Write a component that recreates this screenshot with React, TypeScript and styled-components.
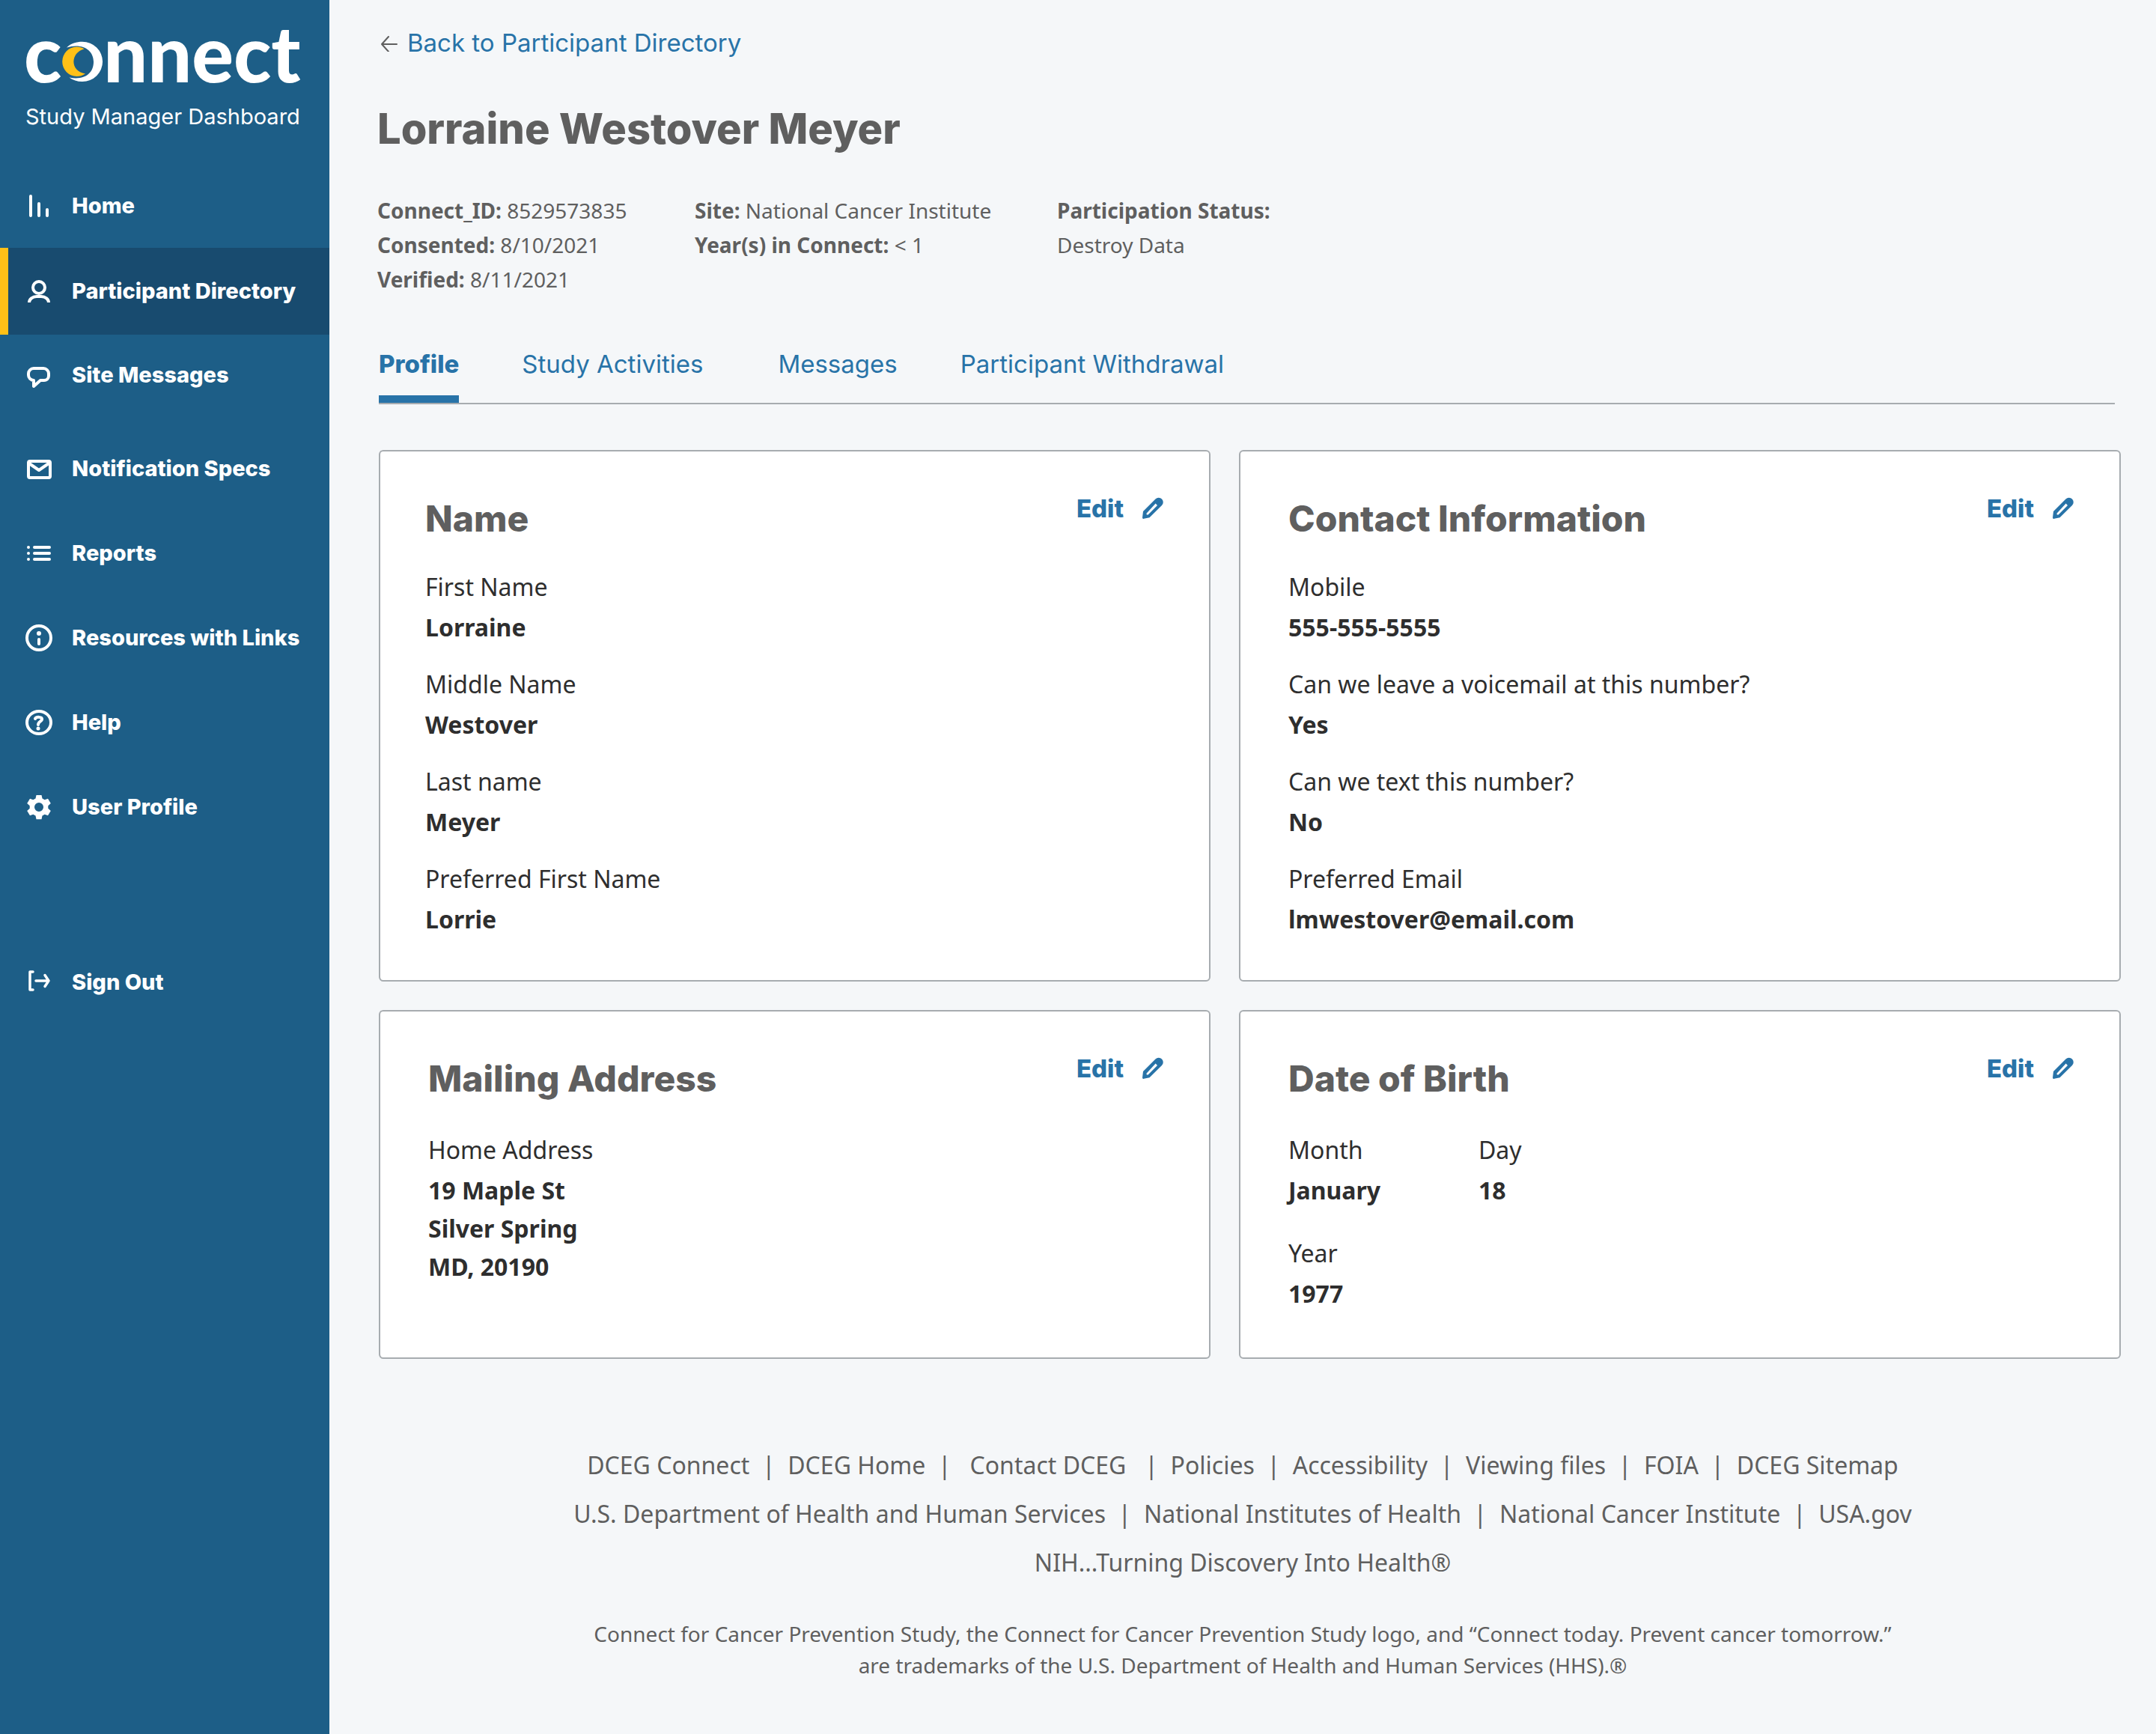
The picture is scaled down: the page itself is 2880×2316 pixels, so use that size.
import React from "react";
import styled, { createGlobalStyle } from "styled-components";

const color = {
  sidebar: "#1d5e87",
  sidebarActive: "#184b6f",
  gold: "#ffc017",
  page: "#f5f7f9",
  link: "#2873a8",
  heading: "#5f5f5f",
  ink: "#2e2e2e",
  border: "#a7acb0",
};

const display = `Inter, "Open Sans", sans-serif`;
const body = `"Noto Sans", "Open Sans", sans-serif`;

const GlobalStyle = createGlobalStyle`
  *, *::before, *::after { box-sizing: border-box; }
  body { margin: 0; background: ${color.page}; font-family: ${body}; color: ${color.ink}; }
  a { color: inherit; text-decoration: none; }
  h1, h2, p, ul, dl, dd { margin: 0; padding: 0; }
  ul { list-style: none; }
`;

const Page = styled.div`
  display: grid;
  grid-template-columns: 440px 1fr;
  min-height: 100vh;
`;

/* Sidebar */

const Sidebar = styled.aside`
  background: ${color.sidebar};
  color: #fff;
  font-family: ${display};
`;

const Brand = styled.div`
  height: 218px;
  padding: 12px 34px 0 32px;
`;

const Logo = styled.a`
  display: flex;
  align-items: baseline;
  height: 124px;
  font-family: Lato, sans-serif;
  font-size: 104px;
  line-height: 116px;
  font-weight: 900;
`;

const LogoMoon = styled.svg`
  flex: none;
  width: 56px;
  height: 56px;
`;

const BrandCaption = styled.p`
  padding-left: 2px;
  font-size: 29px;
  line-height: 40px;
  white-space: nowrap;
`;

const NavGroup = styled.ul<{ $before?: number }>`
  margin-top: ${(p) => p.$before ?? 0}px;
`;

const NavLink = styled.a<{ $active?: boolean }>`
  display: flex;
  align-items: center;
  gap: 26px;
  height: ${(p) => (p.$active ? 116 : 113)}px;
  margin-bottom: ${(p) => (p.$active ? -3 : 0)}px;
  padding-left: 23px;
  border-left: 11px solid ${(p) => (p.$active ? color.gold : "transparent")};
  background: ${(p) => (p.$active ? color.sidebarActive : "transparent")};
  font-size: 29px;
  line-height: 36px;
  font-weight: 800;
  white-space: nowrap;
`;

const NavIcon = styled.svg`
  flex: none;
  width: 36px;
  height: 36px;
  fill: none;
  stroke: #fff;
  stroke-width: 4;
  stroke-linecap: round;
  stroke-linejoin: round;
`;

/* Main column */

const Main = styled.main`
  padding: 37px 47px 0 64px;
`;

const BackLink = styled.a`
  display: inline-flex;
  align-items: center;
  gap: 12px;
  padding-left: 2px;
  font-family: ${display};
  font-size: 33px;
  line-height: 40px;
  color: ${color.link};
`;

const BackArrow = styled.svg`
  width: 26px;
  height: 24px;
  fill: none;
  stroke: ${color.heading};
  stroke-width: 2;
  stroke-linecap: round;
  stroke-linejoin: round;
`;

const PersonName = styled.h1`
  margin-top: 61px;
  font-family: ${display};
  font-size: 56px;
  line-height: 68px;
  font-weight: 800;
  color: ${color.heading};
`;

const Facts = styled.div`
  display: grid;
  grid-template-columns: 424px 484px 1fr;
  margin-top: 52px;
  font-size: 28px;
  line-height: 46px;
  color: ${color.heading};
`;

const Tabs = styled.nav`
  display: flex;
  margin: 70px 8px 0 2px;
  border-bottom: 2px solid ${color.border};
`;

const Tab = styled.a<{ $active?: boolean; $gap?: number }>`
  margin-right: ${(p) => p.$gap ?? 84}px;
  padding-bottom: 22px;
  border-bottom: 10px solid ${(p) => (p.$active ? color.link : "transparent")};
  font-family: ${display};
  font-size: 33px;
  line-height: 40px;
  font-weight: ${(p) => (p.$active ? 800 : 400)};
  color: ${color.link};
`;

const CardGrid = styled.div`
  display: grid;
  grid-template-columns: 1111fr 1178fr;
  gap: 38px;
  margin: 61px 0 0 2px;
`;

const Card = styled.section<{ $inset: number; $bottom: number }>`
  padding: 60px 60px ${(p) => p.$bottom}px ${(p) => p.$inset}px;
  background: #fff;
  border: 2px solid ${color.border};
  border-radius: 6px;
`;

const CardHeader = styled.header`
  display: flex;
  justify-content: space-between;
  align-items: flex-start;
`;

const CardTitle = styled.h2`
  font-family: ${display};
  font-size: 48px;
  line-height: 60px;
  font-weight: 800;
  color: ${color.heading};
`;

const EditButton = styled.button`
  display: flex;
  align-items: center;
  gap: 24px;
  height: 32px;
  padding: 0;
  border: 0;
  background: none;
  font-family: ${display};
  font-size: 33px;
  line-height: 32px;
  font-weight: 800;
  color: ${color.link};
  cursor: pointer;
`;

const Pencil = styled.svg`
  width: 30px;
  height: 30px;
`;

const Fields = styled.dl<{ $top: number; $gap: number; $columns?: string }>`
  display: grid;
  grid-template-columns: ${(p) => p.$columns ?? "1fr"};
  row-gap: ${(p) => p.$gap}px;
  margin-top: ${(p) => p.$top}px;
  font-size: 32px;
`;

const Label = styled.dt`
  line-height: 57px;
`;

const Value = styled.dd`
  line-height: 51px;
  font-weight: 700;
`;

/* Footer */

const Footer = styled.footer`
  padding: 109px 0 40px;
  text-align: center;
  color: ${color.heading};
`;

const FooterLinks = styled.p`
  font-size: 32px;
  line-height: 65px;
`;

const Separator = styled.span`
  white-space: pre;
`;

const Trademark = styled.p`
  margin-top: 42px;
  font-size: 28px;
  line-height: 42px;
`;

const icons: Record<string, React.ReactNode> = {
  bars: (
    <path d="M7 5v26M18 15v16M29 23v8" />
  ),
  person: (
    <>
      <circle cx="18" cy="13" r="8" />
      <path d="M5 33a10 8 0 0 1 10-8h6a10 8 0 0 1 10 8" strokeLinecap="butt" />
    </>
  ),
  message: (
    <path d="M11 9h13a7 7 0 0 1 7 7v3a6 6 0 0 1-6 6h-5l-9 8v-8a7 7 0 0 1-7-7v-2a7 7 0 0 1 7-7Z" />
  ),
  mail: (
    <>
      <rect x="4" y="8" width="29" height="22" rx="2" />
      <path d="M5 11l13 9 13-9" />
    </>
  ),
  list: (
    <path d="M4 10v0M4 18v0M4 26v0M12 10h20M12 18h20M12 26h20" />
  ),
  info: (
    <>
      <circle cx="18" cy="18" r="16" />
      <circle cx="18" cy="12" r="3" fill="#fff" stroke="none" />
      <path d="M18 20v6" />
    </>
  ),
  help: (
    <>
      <ellipse cx="18" cy="18" rx="16" ry="15" />
      <path d="M13 13c1-3 10-3 9 1-1 3-5 3-5 7" />
      <circle cx="17" cy="26" r="2.5" fill="#fff" stroke="none" />
    </>
  ),
  gear: (
    <path
      fill="#fff"
      stroke="none"
      fillRule="evenodd"
      d="M14.5 2h7l1 4.6 3.2 1.7L30 6.8l3.8 6.2-3.5 3.2v3.6l3.5 3.2-3.8 6.2-4.3-1.5-3.2 1.7-1 4.8h-7l-1-4.8-3.2-1.7L6 29.2l-3.8-6.2 3.5-3.2v-3.6L2.2 13 6 6.800l4.300 1.500 3.200-1.700ZM18 12a6 6 0 1 0 0 12 6 6 0 0 0 0-12Z"
    />
  ),
  exit: (
    <path d="M10 4H6v24h4M14 16h17M26 8.500l5 7.500-5 7.500" strokeWidth="3.5" />
  ),
};

type NavEntry = { icon: string; text: string; active?: boolean };

const navGroups: { before: number; items: NavEntry[] }[] = [
  {
    before: 0,
    items: [
      { icon: "bars", text: "Home" },
      { icon: "person", text: "Participant Directory", active: true },
      { icon: "message", text: "Site Messages" },
    ],
  },
  {
    before: 12,
    items: [
      { icon: "mail", text: "Notification Specs" },
      { icon: "list", text: "Reports" },
      { icon: "info", text: "Resources with Links" },
      { icon: "help", text: "Help" },
      { icon: "gear", text: "User Profile" },
    ],
  },
  { before: 121, items: [{ icon: "exit", text: "Sign Out" }] },
];

type FieldEntry = { label: string; value: string[] };

function FieldItem({ label, value }: FieldEntry) {
  return (
    <div>
      <Label>{label}</Label>
      {value.map((line) => (
        <Value key={line}>{line}</Value>
      ))}
    </div>
  );
}

type CardEntry = {
  title: string;
  inset: number;
  top: number;
  bottom: number;
  gap: number;
  columns?: string;
  fields: FieldEntry[];
};

const cards: CardEntry[] = [
  {
    title: "Name",
    inset: 60,
    top: 32,
    bottom: 56,
    gap: 22,
    fields: [
      { label: "First Name", value: ["Lorraine"] },
      { label: "Middle Name", value: ["Westover"] },
      { label: "Last name", value: ["Meyer"] },
      { label: "Preferred First Name", value: ["Lorrie"] },
    ],
  },
  {
    title: "Contact Information",
    inset: 64,
    top: 32,
    bottom: 56,
    gap: 22,
    fields: [
      { label: "Mobile", value: ["555-555-5555"] },
      { label: "Can we leave a voicemail at this number?", value: ["Yes"] },
      { label: "Can we text this number?", value: ["No"] },
      { label: "Preferred Email", value: ["lmwestover@email.com"] },
    ],
  },
  {
    title: "Mailing Address",
    inset: 64,
    top: 36,
    bottom: 60,
    gap: 22,
    fields: [{ label: "Home Address", value: ["19 Maple St", "Silver Spring", "MD, 20190"] }],
  },
  {
    title: "Date of Birth",
    inset: 64,
    top: 36,
    bottom: 60,
    gap: 30,
    columns: "254px 1fr",
    fields: [
      { label: "Month", value: ["January"] },
      { label: "Day", value: ["18"] },
      { label: "Year", value: ["1977"] },
    ],
  },
];

function InfoCard({ title, inset, top, bottom, gap, columns, fields }: CardEntry) {
  return (
    <Card $inset={inset} $bottom={bottom}>
      <CardHeader>
        <CardTitle>{title}</CardTitle>
        <EditButton type="button" aria-label={`Edit ${title}`}>
          Edit
          <Pencil viewBox="0 0 30 30" aria-hidden="true">
            <path
              fill={color.link}
              fillRule="evenodd"
              d="M1 27.500 2 19 18.500 2.500a6 6 0 0 1 8.500 8.500L10.500 27.300 3 28.800a1.500 1.500 0 0 1-2-1.300ZM6.500 21.800l.2 1.700 1.900-.1L21 11 18.600 8.600Z"
            />
          </Pencil>
        </EditButton>
      </CardHeader>
      <Fields $top={top} $gap={gap} $columns={columns}>
        {fields.map((f) => (
          <FieldItem key={f.label} {...f} />
        ))}
      </Fields>
    </Card>
  );
}

const footerRows: { text: string; sep?: string }[][] = [
  [
    { text: "DCEG Connect" },
    { text: "DCEG Home", sep: "  |  " },
    { text: "Contact DCEG", sep: "  |   " },
    { text: "Policies", sep: "   |  " },
    { text: "Accessibility", sep: "  |  " },
    { text: "Viewing files", sep: "  |  " },
    { text: "FOIA", sep: "  |  " },
    { text: "DCEG Sitemap", sep: "  |  " },
  ],
  [
    { text: "U.S. Department of Health and Human Services" },
    { text: "National Institutes of Health", sep: "  |  " },
    { text: "National Cancer Institute", sep: "  |  " },
    { text: "USA.gov", sep: "  |  " },
  ],
  [{ text: "NIH...Turning Discovery Into Health®" }],
];

export default function App() {
  return (
    <>
      <GlobalStyle />
      <Page>
        <Sidebar>
          <Brand>
            <Logo href="#home" aria-label="connect">
              <span>c</span>
              <LogoMoon viewBox="90 54 56 56" aria-hidden="true">
                <path
                  fill="#fff"
                  d="M97 63.5C103 57.5 110 55.7 118 55.7A27 26.6 0 0 1 118 109C111 109 105 107 100.5 103.5C121 107.5 133 98 133 82.5C133 66 117 57 97 63.5Z"
                />
                <path
                  fill={color.gold}
                  d="M120.5 65.5C102 70 101 95 122 98.5C118 101 115 102 110.5 102A19.3 19.7 0 0 1 110.5 62.6C114 62.6 117.5 63.5 120.5 65.5Z"
                />
              </LogoMoon>
              <span>nnect</span>
            </Logo>
            <BrandCaption>Study Manager Dashboard</BrandCaption>
          </Brand>
          <nav aria-label="Dashboard">
            {navGroups.map((group) => (
              <NavGroup key={group.items[0].text} $before={group.before}>
                {group.items.map((item) => (
                  <li key={item.text}>
                    <NavLink
                      href="#"
                      $active={item.active}
                      aria-current={item.active ? "page" : undefined}
                    >
                      <NavIcon viewBox="0 0 36 36" aria-hidden="true">
                        {icons[item.icon]}
                      </NavIcon>
                      {item.text}
                    </NavLink>
                  </li>
                ))}
              </NavGroup>
            ))}
          </nav>
        </Sidebar>

        <div>
          <Main>
            <BackLink href="#directory">
              <BackArrow viewBox="0 0 26 24" aria-hidden="true">
                <path d="M24 14H4M13 4 4 14l9 10" />
              </BackArrow>
              Back to Participant Directory
            </BackLink>
            <PersonName>Lorraine Westover Meyer</PersonName>
            <Facts>
              <div>
                <p><b>Connect_ID:</b> 8529573835</p>
                <p><b>Consented:</b> 8/10/2021</p>
                <p><b>Verified:</b> 8/11/2021</p>
              </div>
              <div>
                <p><b>Site:</b> National Cancer Institute</p>
                <p><b>Year(s) in Connect:</b> &lt; 1</p>
              </div>
              <div>
                <p><b>Participation Status:</b></p>
                <p>Destroy Data</p>
              </div>
            </Facts>
            <Tabs aria-label="Participant">
              <Tab href="#profile" $active aria-current="page">Profile</Tab>
              <Tab href="#activities" $gap={100}>Study Activities</Tab>
              <Tab href="#messages">Messages</Tab>
              <Tab href="#withdrawal">Participant Withdrawal</Tab>
            </Tabs>
            <CardGrid>
              {cards.map((card) => (
                <InfoCard key={card.title} {...card} />
              ))}
            </CardGrid>
          </Main>
          <Footer>
            {footerRows.map((row) => (
              <FooterLinks key={row[0].text}>
                {row.map((item) => (
                  <React.Fragment key={item.text}>
                    {item.sep && <Separator>{item.sep}</Separator>}
                    <a href="#">{item.text}</a>
                  </React.Fragment>
                ))}
              </FooterLinks>
            ))}
            <Trademark>
              Connect for Cancer Prevention Study, the Connect for Cancer Prevention Study logo, and
              “Connect today. Prevent cancer tomorrow.”
              <br />
              are trademarks of the U.S. Department of Health and Human Services (HHS).®
            </Trademark>
          </Footer>
        </div>
      </Page>
    </>
  );
}
